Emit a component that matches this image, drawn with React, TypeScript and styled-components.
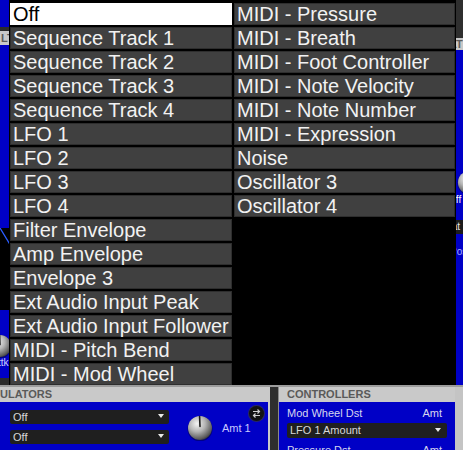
import React, { useId } from "react";
import styled, { createGlobalStyle } from "styled-components";

const BLUE = "#0000c6";
const HEADER_GRAY = "#c9c9c9";

const Global = createGlobalStyle`
  html, body { margin: 0; padding: 0; background: #000; }
  body { font-family: "Liberation Sans", Arial, sans-serif; }
  #root { width: 463px; height: 450px; }
`;

const Screen = styled.div`
  position: relative;
  width: 463px;
  height: 450px;
  overflow: hidden;
  display: flex;
  flex-direction: column;
  background: #2e2e2e;
  font-family: "Liberation Sans", Arial, sans-serif;
`;

/* ---------- background synth panels ---------- */
const TopArea = styled.div`
  display: flex;
  height: 385px;
  flex: none;
`;

const Column = styled.div<{ $w?: number }>`
  display: flex;
  flex-direction: column;
  min-width: 0;
  overflow: hidden;
  ${(p) => (p.$w ? `width: ${p.$w}px; flex: none;` : "flex: 1;")}
`;

const Fill = styled.div<{ $h?: number; $bg: string }>`
  background: ${(p) => p.$bg};
  ${(p) => (p.$h ? `height: ${p.$h}px; flex: none;` : "flex: 1;")}
  display: flex;
  flex-direction: column;
  overflow: hidden;
`;

const SectionHeader = styled.div<{ $h: number; $indent: number }>`
  height: ${(p) => p.$h}px;
  flex: none;
  background: ${HEADER_GRAY};
  color: #5c5c5c;
  font-weight: bold;
  font-size: 11px;
  line-height: ${(p) => p.$h + 1}px;
  padding-left: ${(p) => p.$indent}px;
  white-space: nowrap;
  overflow: hidden;
`;

const EnvGraph = styled.div`
  height: 82px;
  flex: none;
  background: #000;
  overflow: hidden;
`;

const KnobCell = styled.div<{ $ml: number; $mt: number }>`
  display: flex;
  flex-direction: column;
  align-items: center;
  width: 26px;
  margin-left: ${(p) => p.$ml}px;
  margin-top: ${(p) => p.$mt}px;
`;

const TinyLabel = styled.div<{ $color: string; $pl?: number; $mt?: number }>`
  font-size: 10px;
  line-height: 10px;
  color: ${(p) => p.$color};
  white-space: nowrap;
  padding-left: ${(p) => p.$pl ?? 0}px;
  margin-top: ${(p) => p.$mt ?? 0}px;
`;

const TinyBar = styled.div`
  margin: 15px 0 0 4px;
  height: 14px;
  background: #1c1c1c;
  color: #e6e6e6;
  font-size: 10px;
  line-height: 14px;
  padding-left: 1px;
  white-space: nowrap;
`;

/* ---------- popup menu ---------- */
const Menu = styled.div`
  position: absolute;
  top: 0;
  left: 9px;
  width: 447px;
  height: 385px;
  box-sizing: border-box;
  padding: 3px 1px 0 1px;
  background: #000;
  display: grid;
  grid-template-columns: 222px 221px;
  grid-template-rows: repeat(16, 22px);
  grid-auto-flow: column;
  column-gap: 2px;
  row-gap: 2px;
  z-index: 5;
`;

const MenuItem = styled.div<{ $selected?: boolean }>`
  height: 22px;
  padding-left: 3px;
  font-size: 20px;
  line-height: 22px;
  white-space: nowrap;
  overflow: hidden;
  color: ${(p) => (p.$selected ? "#000" : "#f2f2f2")};
  background: ${(p) => (p.$selected ? "#fff" : "#404040")};
  box-shadow: ${(p) => (p.$selected ? "none" : "inset 0 0 0 1px #2e2e2e")};
`;

/* ---------- bottom panels ---------- */
const BottomArea = styled.div`
  display: flex;
  height: 65px;
  flex: none;
  box-sizing: border-box;
  border-top: 2px solid #9c9c9c;
  background: #c4c4c4;
`;

const Panel = styled.section<{ $w: number }>`
  width: ${(p) => p.$w}px;
  flex: none;
  display: flex;
  flex-direction: column;
  overflow: hidden;
`;

const PanelHeader = styled.div<{ $indent: number }>`
  height: 15px;
  flex: none;
  background: ${HEADER_GRAY};
  color: #5a5a5a;
  font-weight: bold;
  font-size: 11px;
  line-height: 15px;
  padding-left: ${(p) => p.$indent}px;
  white-space: nowrap;
`;

const ModBody = styled.div`
  flex: 1;
  background: ${BLUE};
  display: flex;
  align-items: flex-start;
`;

const DropStack = styled.div`
  margin: 8px 0 0 10px;
  width: 159px;
  display: flex;
  flex-direction: column;
  gap: 6px;
`;

const Dropdown = styled.div<{ $h: number; $pr: number; $w?: number; $mt?: number }>`
  height: ${(p) => p.$h}px;
  ${(p) => (p.$w ? `width: ${p.$w}px;` : "")}
  margin-top: ${(p) => p.$mt ?? 0}px;
  box-sizing: border-box;
  background: #1f1f1f;
  border-radius: 2px;
  display: flex;
  align-items: center;
  justify-content: space-between;
  padding: 0 ${(p) => p.$pr}px 0 3px;
  color: #d8d8d8;
  font-size: 11px;
  line-height: ${(p) => p.$h}px;
  white-space: nowrap;
`;

const Caret = styled.span`
  width: 0;
  height: 0;
  border-left: 3px solid transparent;
  border-right: 3px solid transparent;
  border-top: 4px solid #e8e8e8;
  margin-top: -2px;
`;

const KnobSlot = styled.div`
  margin: 13px 0 0 18px;
  width: 26px;
  height: 26px;
  flex: none;
`;

const AmtColumn = styled.div`
  margin-left: 9px;
  width: 42px;
  display: flex;
  flex-direction: column;
`;

const SwapButton = styled.div`
  align-self: flex-end;
  margin-top: 4px;
  width: 15px;
  height: 15px;
  border-radius: 50%;
  background: #121212;
  box-shadow: 0 0 0 1px #2a2a5a;
  display: flex;
  align-items: center;
  justify-content: center;
`;

const AmtLabel = styled.div`
  margin-top: 1px;
  font-size: 11px;
  line-height: 12px;
  color: #c8c8ff;
  white-space: nowrap;
`;

const Gutter = styled.div`
  width: 11px;
  flex: none;
  box-sizing: border-box;
  background: #2e2e2e;
  border-left: 2px solid ${HEADER_GRAY};
  border-right: 1px solid #8a8a8a;
`;

const CtrlBody = styled.div`
  flex: 1;
  background: ${BLUE};
  display: flex;
  flex-direction: column;
  padding: 5px 8px 0 8px;
`;

const LabelRow = styled.div<{ $mt?: number }>`
  display: flex;
  justify-content: space-between;
  padding-right: 5px;
  margin-top: ${(p) => p.$mt ?? 0}px;
  font-size: 11px;
  line-height: 13px;
  color: #d6d6ee;
  white-space: nowrap;
`;

const RightStrip = styled.div`
  width: 8px;
  flex: none;
  background: #c4c4c4;
`;

/* ---------- drawings ---------- */
const Knob: React.FC<{ size: number }> = ({ size }) => {
  const id = useId().replace(/:/g, "");
  return (
    <svg width={size} height={size} viewBox="0 0 26 26">
      <defs>
        <radialGradient id={`r${id}`} cx="38%" cy="32%" r="75%">
          <stop offset="0" stopColor="#f4f4f4" />
          <stop offset="0.45" stopColor="#b4b4b4" />
          <stop offset="0.85" stopColor="#5c5c5c" />
          <stop offset="1" stopColor="#2c2c2c" />
        </radialGradient>
      </defs>
      <circle cx="13" cy="13.8" r="12.6" fill="#000050" opacity="0.55" />
      <circle cx="13" cy="13" r="12" fill={`url(#r${id})`} />
      <line x1="12.6" y1="1.5" x2="13" y2="11.5" stroke="#1a1a1a" strokeWidth="1.6" strokeLinecap="round" />
    </svg>
  );
};

const SwapIcon = () => (
  <svg width="11" height="11" viewBox="0 0 11 11">
    <path d="M2 3.5h6.5M6.5 1.5l2 2-2 2" stroke="#cfcfcf" strokeWidth="1.2" fill="none" />
    <path d="M9 7.5H2.5M4.5 5.5l-2 2 2 2" stroke="#cfcfcf" strokeWidth="1.2" fill="none" />
  </svg>
);

const leftItems = [
  "Off",
  "Sequence Track 1",
  "Sequence Track 2",
  "Sequence Track 3",
  "Sequence Track 4",
  "LFO 1",
  "LFO 2",
  "LFO 3",
  "LFO 4",
  "Filter Envelope",
  "Amp Envelope",
  "Envelope 3",
  "Ext Audio Input Peak",
  "Ext Audio Input Follower",
  "MIDI - Pitch Bend",
  "MIDI - Mod Wheel",
];

const rightItems = [
  "MIDI - Pressure",
  "MIDI - Breath",
  "MIDI - Foot Controller",
  "MIDI - Note Velocity",
  "MIDI - Note Number",
  "MIDI - Expression",
  "Noise",
  "Oscillator 3",
  "Oscillator 4",
];

export default function App() {
  return (
    <Screen>
      <Global />
      <TopArea>
        <Column>
          <Fill $h={27} $bg={BLUE} />
          <Fill $h={4} $bg="#2b2b2b" />
          <SectionHeader $h={14} $indent={1}>LT</SectionHeader>
          <Fill $h={183} $bg={BLUE} />
          <EnvGraph>
            <svg width="440" height="82" viewBox="0 0 440 82">
              <polyline points="0,0 40,66 160,66 200,82" fill="none" stroke="#2a5cff" strokeWidth="1.3" />
            </svg>
          </EnvGraph>
          <Fill $h={68} $bg={BLUE}>
            <KnobCell $ml={-13} $mt={24}>
              <Knob size={24} />
              <TinyLabel $color="#d0d0ff">Attk</TinyLabel>
            </KnobCell>
          </Fill>
          <Fill $h={7} $bg="#2b2b2b" />
        </Column>
        <Column $w={23}>
          <Fill $h={38} $bg="#2f2f2f" />
          <SectionHeader $h={12} $indent={10}>LT</SectionHeader>
          <Fill $bg={BLUE}>
            <KnobCell $ml={16} $mt={120}>
              <Knob size={25} />
            </KnobCell>
            <TinyLabel $color="#ffffff" $pl={8}>Off</TinyLabel>
            <TinyBar>Sat</TinyBar>
            <TinyLabel $color="#a8b0ff" $pl={10} $mt={13}>Pos</TinyLabel>
          </Fill>
        </Column>
      </TopArea>

      <BottomArea>
        <Panel $w={268}>
          <PanelHeader $indent={0}>ULATORS</PanelHeader>
          <ModBody>
            <DropStack>
              <Dropdown $h={14} $pr={5}>
                Off
                <Caret />
              </Dropdown>
              <Dropdown $h={14} $pr={5}>
                Off
                <Caret />
              </Dropdown>
            </DropStack>
            <KnobSlot>
              <Knob size={26} />
            </KnobSlot>
            <AmtColumn>
              <SwapButton>
                <SwapIcon />
              </SwapButton>
              <AmtLabel>Amt 1</AmtLabel>
            </AmtColumn>
          </ModBody>
        </Panel>
        <Gutter />
        <Panel $w={176}>
          <PanelHeader $indent={8}>CONTROLLERS</PanelHeader>
          <CtrlBody>
            <LabelRow>
              <span>Mod Wheel Dst</span>
              <span>Amt</span>
            </LabelRow>
            <Dropdown $h={15} $pr={6} $w={160} $mt={3}>
              LFO 1 Amount
              <Caret />
            </Dropdown>
            <LabelRow $mt={6}>
              <span>Pressure Dst</span>
              <span>Amt</span>
            </LabelRow>
          </CtrlBody>
        </Panel>
        <RightStrip />
      </BottomArea>

      <Menu>
        {leftItems.map((t, i) => (
          <MenuItem key={t} $selected={i === 0}>
            {t}
          </MenuItem>
        ))}
        {rightItems.map((t) => (
          <MenuItem key={t}>{t}</MenuItem>
        ))}
      </Menu>
    </Screen>
  );
}
